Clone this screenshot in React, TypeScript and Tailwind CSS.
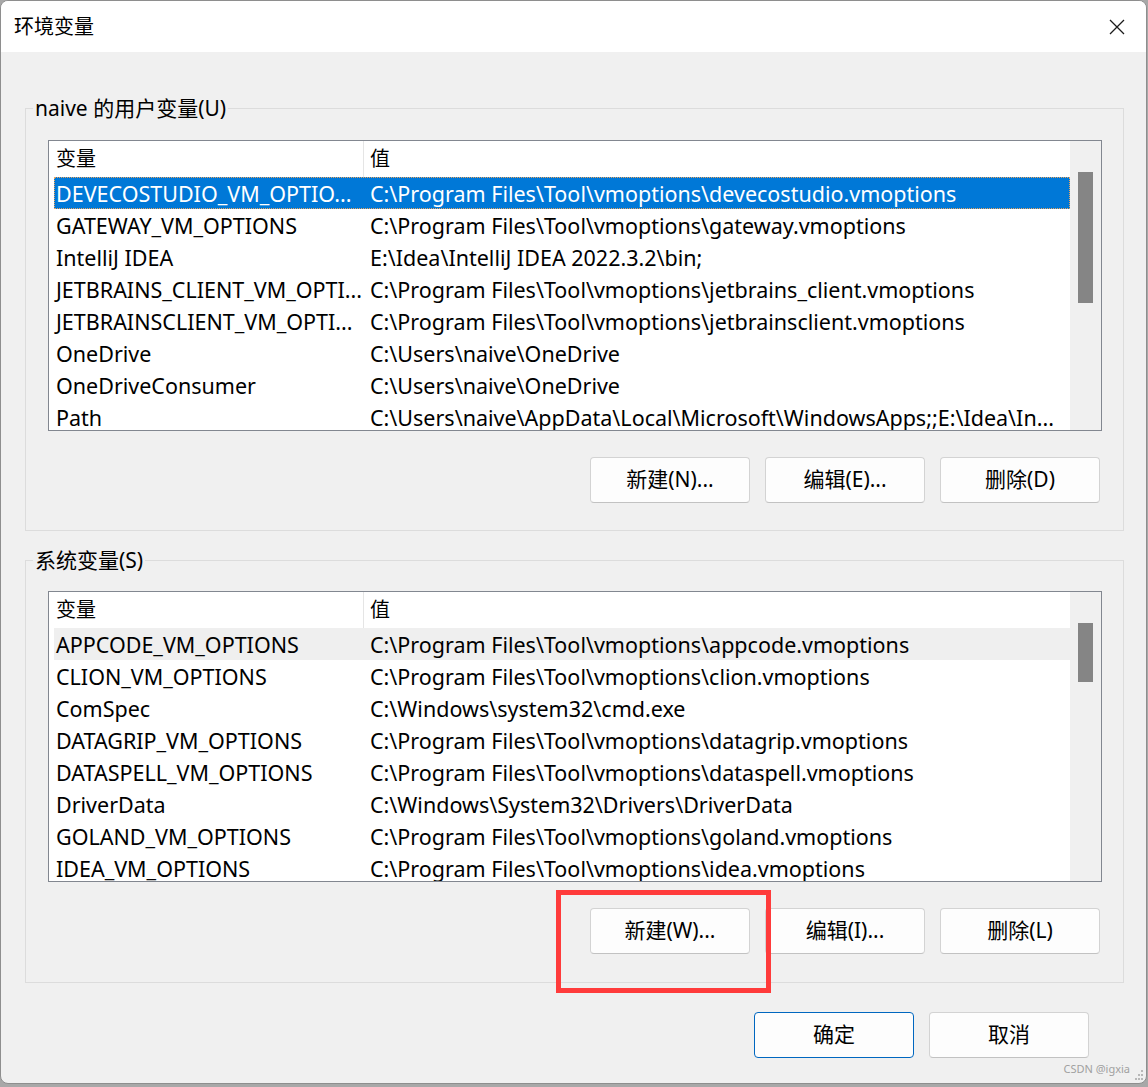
import React from "react";

type Row = { name: string; value: string };

const vm = (n: string) => `C:\\Program Files\\Tool\\vmoptions\\${n}.vmoptions`;

const userVars: Row[] = [
  { name: "DEVECOSTUDIO_VM_OPTIO...", value: vm("devecostudio") },
  { name: "GATEWAY_VM_OPTIONS", value: vm("gateway") },
  { name: "IntelliJ IDEA", value: "E:\\Idea\\IntelliJ IDEA 2022.3.2\\bin;" },
  { name: "JETBRAINS_CLIENT_VM_OPTI...", value: vm("jetbrains_client") },
  { name: "JETBRAINSCLIENT_VM_OPTI...", value: vm("jetbrainsclient") },
  { name: "OneDrive", value: "C:\\Users\\naive\\OneDrive" },
  { name: "OneDriveConsumer", value: "C:\\Users\\naive\\OneDrive" },
  { name: "Path", value: "C:\\Users\\naive\\AppData\\Local\\Microsoft\\WindowsApps;;E:\\Idea\\In..." },
];

const systemVars: Row[] = [
  { name: "APPCODE_VM_OPTIONS", value: vm("appcode") },
  { name: "CLION_VM_OPTIONS", value: vm("clion") },
  { name: "ComSpec", value: "C:\\Windows\\system32\\cmd.exe" },
  { name: "DATAGRIP_VM_OPTIONS", value: vm("datagrip") },
  { name: "DATASPELL_VM_OPTIONS", value: vm("dataspell") },
  { name: "DriverData", value: "C:\\Windows\\System32\\Drivers\\DriverData" },
  { name: "GOLAND_VM_OPTIONS", value: vm("goland") },
  { name: "IDEA_VM_OPTIONS", value: vm("idea") },
];

function Button({ label, primary }: { label: string; primary?: boolean }) {
  return (
    <button
      className={`flex h-[46px] w-[160px] items-center justify-center rounded-[4px] border bg-[#fdfdfd] text-[21px] text-black ${
        primary ? "border-[#0067c0]" : "border-[#d3d3d3] border-b-[#c2c2c2]"
      }`}
    >
      {label}
    </button>
  );
}

function VarList({ rows, selected, hover, thumbH }: { rows: Row[]; selected?: number; hover?: number; thumbH: number }) {
  return (
    <div className="flex h-[291px] overflow-hidden border border-[#828790] bg-white">
      <div className="flex-1 overflow-hidden">
        <div className="flex h-[36px] items-center pl-[5px] text-[20px]">
          <div className="w-[309px] pl-[2px]">变量</div>
          <div className="h-full border-l border-[#e5e5e5] pl-[6px] leading-[36px]">值</div>
        </div>
        {rows.map((r, i) => {
          const sel = i === selected;
          const hov = i === hover;
          return (
            <div
              key={r.name}
              className={`ml-[5px] flex h-[32px] items-center whitespace-nowrap pt-[2px] text-[21.5px] ${
                sel
                  ? "border border-dotted border-[#e9a45f] bg-[#0078d7] text-white"
                  : hov
                  ? "border border-transparent bg-[#efefef]"
                  : "border border-transparent"
              }`}
            >
              <div className="w-[308px] pl-[1px]">{r.name}</div>
              <div className="pl-[7px]">{r.value}</div>
            </div>
          );
        })}
      </div>
      <div className="w-[31px] bg-[#f0f0f0] pl-[8px] pt-[31px]">
        <div className="w-[15px] bg-[#858585]" style={{ height: thumbH }} />
      </div>
    </div>
  );
}

function Group({
  title,
  rows,
  buttons,
  selected,
  hover,
  thumbH,
  pt,
  pb,
}: {
  title: string;
  rows: Row[];
  buttons: string[];
  selected?: number;
  hover?: number;
  thumbH: number;
  pt: string;
  pb: string;
}) {
  return (
    <fieldset className="border border-[#dcdcdc] px-[7px]">
      <legend className="px-[2px] text-[21px] leading-[28px]">{title}</legend>
      <div className={`pl-[15px] pr-[14px] ${pt} ${pb}`}>
        <VarList rows={rows} selected={selected} hover={hover} thumbH={thumbH} />
        <div className="mr-[2px] mt-[26px] flex justify-end gap-[15px]">
          {buttons.map((b) => (
            <Button key={b} label={b} />
          ))}
        </div>
      </div>
    </fieldset>
  );
}

export default function App() {
  return (
    <div
      className="h-[1087px] w-[1148px] bg-[#a8a8a8] text-[20px] text-black"
      style={{ fontFamily: '"Noto Sans", "Noto Sans CJK SC", sans-serif' }}
    >
      <div className="relative h-[1084px] w-[1147px] overflow-hidden rounded-[8px] border border-[#8e8e8e] bg-[#f0f0f0]">
        <div className="flex h-[51px] items-center justify-between bg-white pl-[13px] pr-[21px]">
          <span className="text-[20px]">环境变量</span>
          <svg width="16" height="16" viewBox="0 0 16 16">
            <path d="M1 1 L15 15 M15 1 L1 15" stroke="#1b1b1b" strokeWidth="1.3" fill="none" />
          </svg>
        </div>

        <div className="ml-[24px] mr-[22px] mt-[42px]">
          <Group
            title="naive 的用户变量(U)"
            rows={userVars}
            buttons={["新建(N)...", "编辑(E)...", "删除(D)"]}
            selected={0}
            thumbH={131}
            pt="pt-[18px]"
            pb="pb-[27px]"
          />
          <div className="mt-[15px]">
            <Group
              title="系统变量(S)"
              rows={systemVars}
              buttons={["新建(W)...", "编辑(I)...", "删除(L)"]}
              hover={0}
              thumbH={59}
              pt="pt-[17px]"
              pb="pb-[28px]"
            />
          </div>
        </div>

        <div className="mt-[29px] flex justify-end gap-[15px] pr-[57px]">
          <Button label="确定" primary />
          <Button label="取消" />
        </div>

        {/* highlight drawn over the screenshot */}
        <div className="absolute left-[555px] top-[889px] h-[103px] w-[215px] border-[5px] border-[#ff3b3b]" />

        <span className="absolute bottom-[6px] right-[16px] text-[11px] text-[#a0a0a0]">CSDN @igxia</span>
        <svg className="absolute bottom-[2px] right-[2px]" width="12" height="12" viewBox="0 0 12 12">
          {[
            [9, 1],
            [6, 5],
            [9, 5],
            [3, 9],
            [6, 9],
            [9, 9],
          ].map(([x, y]) => (
            <rect key={`${x}-${y}`} x={x} y={y} width="2" height="2" fill="#b8b8b8" />
          ))}
        </svg>
      </div>
    </div>
  );
}
